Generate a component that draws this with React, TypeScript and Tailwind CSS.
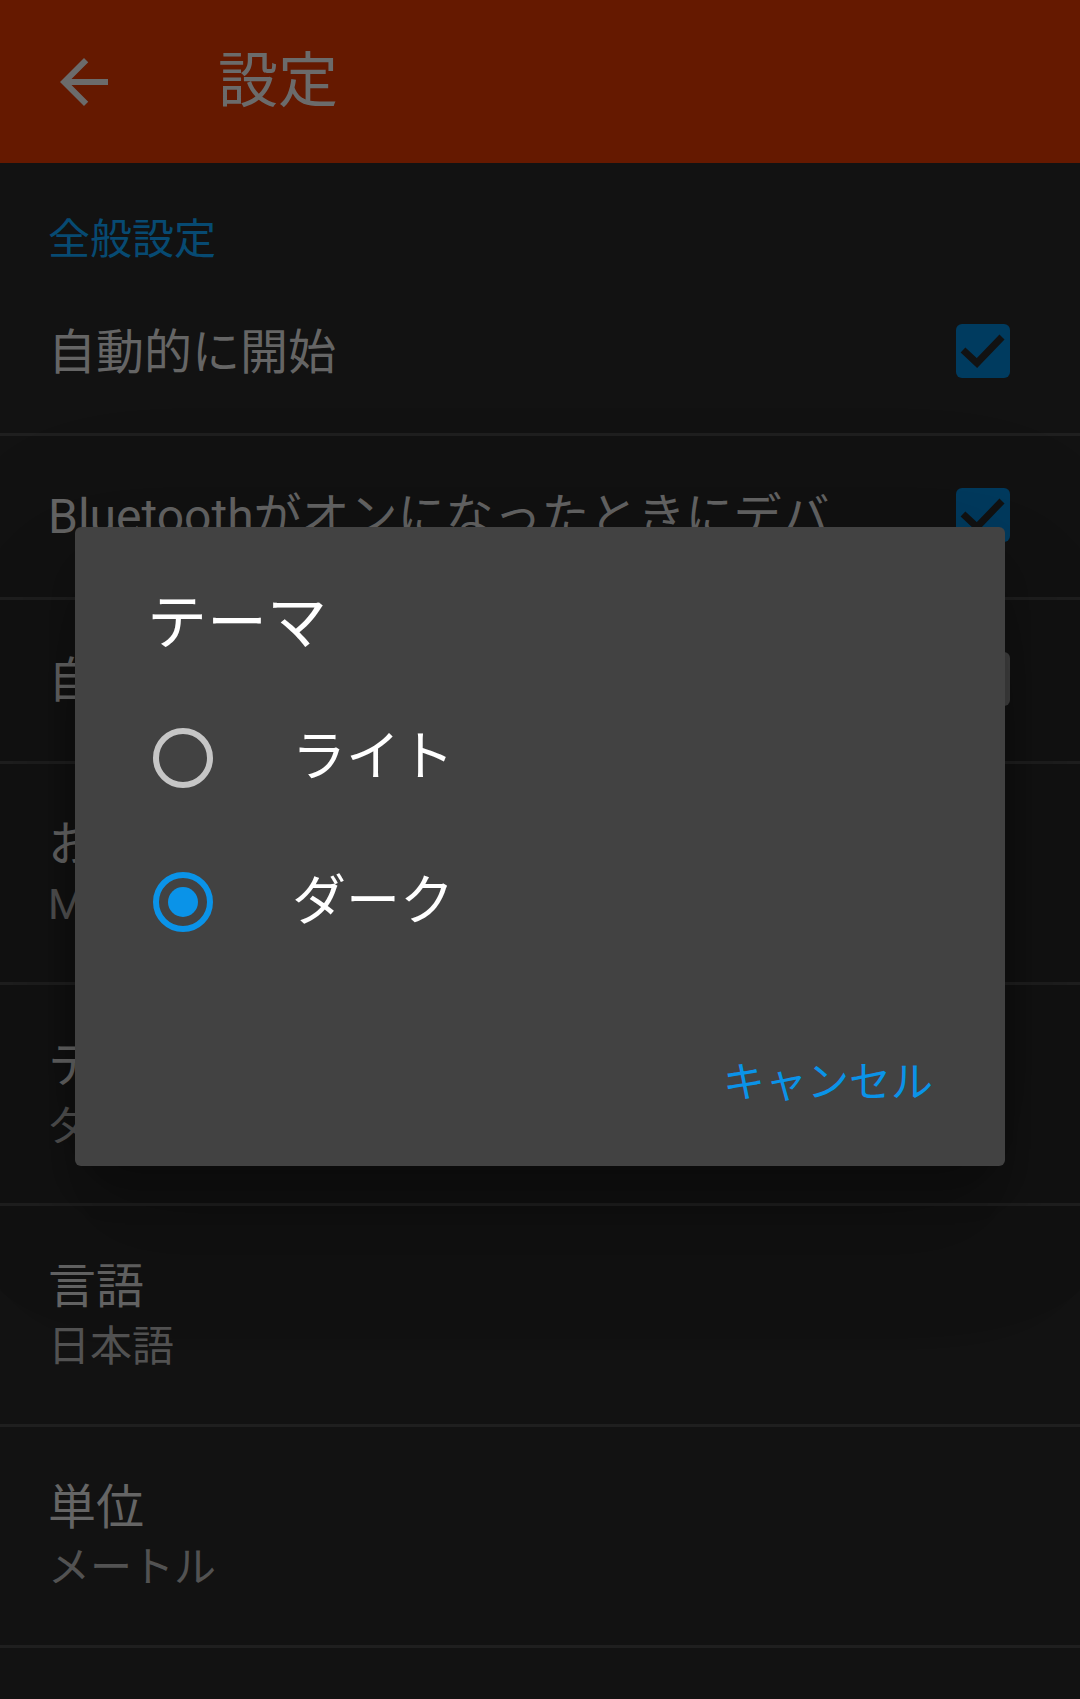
import React from "react";

const FONT = { fontFamily: "Roboto, 'Noto Sans CJK JP', 'Noto Sans', sans-serif" };

type Row =
  | { kind: "check"; title: string; state: "on" | "off" }
  | { kind: "summary"; title: string; summary: string };

const ROWS: Row[] = [
  { kind: "check", title: "自動的に開始", state: "on" },
  { kind: "check", title: "Bluetoothがオンになったときにデバイスに接続する", state: "on" },
  { kind: "check", title: "自動的に再接続", state: "off" },
  { kind: "summary", title: "お気に入りのデバイス", summary: "Mi Smart Band 4" },
  { kind: "summary", title: "テーマ", summary: "ダーク" },
  { kind: "summary", title: "言語", summary: "日本語" },
  { kind: "summary", title: "単位", summary: "メートル" },
];

function CheckBox({ state }: { state: "on" | "off" }) {
  if (state === "off") {
    return <div className="w-[54px] h-[54px] rounded-[6px] bg-[#414141] flex-shrink-0" />;
  }
  return (
    <div className="w-[54px] h-[54px] rounded-[6px] bg-[#003b5f] flex-shrink-0">
      <svg viewBox="0 0 54 54" className="w-[54px] h-[54px]">
        <polyline points="7,26 21,39 46,13" fill="none" stroke="#121212" strokeWidth="7" />
      </svg>
    </div>
  );
}

function Radio({ checked }: { checked: boolean }) {
  return checked ? (
    <div className="w-[60px] h-[60px] rounded-full border-[6px] border-[#0a93e8] flex items-center justify-center flex-shrink-0">
      <div className="w-[30px] h-[30px] rounded-full bg-[#0a93e8]" />
    </div>
  ) : (
    <div className="w-[60px] h-[60px] rounded-full border-[6px] border-[#c6c6c6] flex-shrink-0" />
  );
}

export default function App() {
  return (
    <div className="relative w-[1080px] h-[1699px] bg-[#121212] overflow-hidden" style={FONT}>
      <header className="h-[163px] bg-[#651900] flex items-center">
        <div className="w-[72px] h-[72px] ml-[48px]">
          <svg viewBox="0 0 24 24" className="w-[72px] h-[72px]" fill="#6b6b6b">
            <path d="M20 11H7.83l5.59-5.59L12 4l-8 8 8 8 1.41-1.41L7.83 13H20v-2z" />
          </svg>
        </div>
        <h1 className="ml-[98px] text-[60px] leading-[80px] text-[#6b6b6b]">設定</h1>
      </header>

      <div className="h-[109px] pl-[48px] pt-[49px]">
        <p className="text-[42px] leading-[56px] text-[#074a72]">全般設定</p>
      </div>

      {ROWS.map((row) => (
        <div key={row.title} className="border-b-[3px] border-[#1f1f1f]">
          {row.kind === "check" ? (
            <div className="h-[161px] flex items-center pl-[48px] pr-[70px]">
              <p className="flex-1 min-w-0 truncate pr-[80px] text-[48px] leading-[64px] text-[#656565]">
                {row.title}
              </p>
              <div className="-mt-[3px]">
                <CheckBox state={row.state} />
              </div>
            </div>
          ) : (
            <div className="h-[218px] flex flex-col justify-center pl-[48px]">
              <p className="text-[48px] leading-[64px] text-[#656565]">{row.title}</p>
              <p className="text-[42px] leading-[56px] text-[#525252]">{row.summary}</p>
            </div>
          )}
        </div>
      ))}

      <div className="absolute left-[75px] top-[527px] w-[930px] h-[639px] bg-[#424242] rounded-[6px] shadow-[0_72px_114px_9px_rgba(0,0,0,0.14),0_27px_138px_24px_rgba(0,0,0,0.12),0_33px_45px_-21px_rgba(0,0,0,0.2)] flex flex-col">
        <h2 className="pl-[72px] pt-[57px] text-[60px] leading-[80px] text-white">テーマ</h2>
        <div className="mt-[22px] flex flex-col">
          {[
            { label: "ライト", checked: false },
            { label: "ダーク", checked: true },
          ].map((o) => (
            <div key={o.label} className="h-[144px] flex items-center pl-[78px]">
              <Radio checked={o.checked} />
              <span className="ml-[79px] text-[54px] leading-[64px] text-white">{o.label}</span>
            </div>
          ))}
        </div>
        <div className="mt-[67px] h-[84px] flex items-center justify-end pr-[72px]">
          <span className="text-[42px] leading-[56px] text-[#0a93e8]">キャンセル</span>
        </div>
      </div>
    </div>
  );
}
